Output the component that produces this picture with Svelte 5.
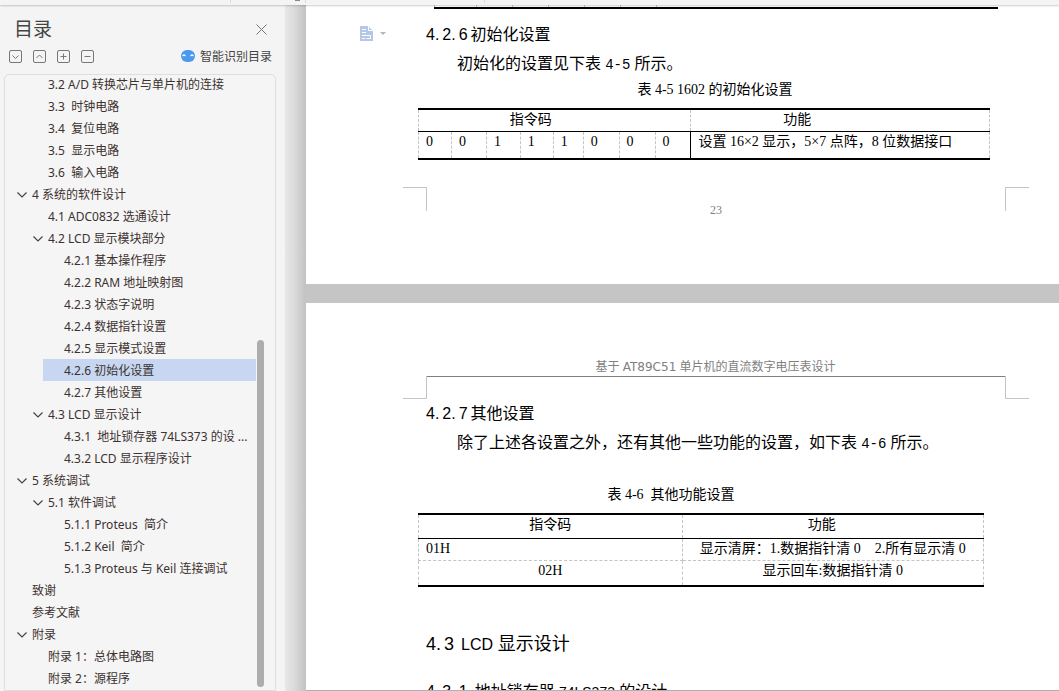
<script>
  const outline = [
    { level: 2, text: '3.2 A/D 转换芯片与单片机的连接' },
    { level: 2, text: '3.3  时钟电路' },
    { level: 2, text: '3.4  复位电路' },
    { level: 2, text: '3.5  显示电路' },
    { level: 2, text: '3.6  输入电路' },
    { level: 1, text: '4 系统的软件设计', open: true },
    { level: 2, text: '4.1 ADC0832 选通设计' },
    { level: 2, text: '4.2 LCD 显示模块部分', open: true },
    { level: 3, text: '4.2.1 基本操作程序' },
    { level: 3, text: '4.2.2 RAM 地址映射图' },
    { level: 3, text: '4.2.3 状态字说明' },
    { level: 3, text: '4.2.4 数据指针设置' },
    { level: 3, text: '4.2.5 显示模式设置' },
    { level: 3, text: '4.2.6 初始化设置' },
    { level: 3, text: '4.2.7 其他设置' },
    { level: 2, text: '4.3 LCD 显示设计', open: true },
    { level: 3, text: '4.3.1  地址锁存器 74LS373 的设 ...' },
    { level: 3, text: '4.3.2 LCD 显示程序设计' },
    { level: 1, text: '5 系统调试', open: true },
    { level: 2, text: '5.1 软件调试', open: true },
    { level: 3, text: '5.1.1 Proteus  简介' },
    { level: 3, text: '5.1.2 Keil  简介' },
    { level: 3, text: '5.1.3 Proteus 与 Keil 连接调试' },
    { level: 1, text: '致谢' },
    { level: 1, text: '参考文献' },
    { level: 1, text: '附录', open: true },
    { level: 2, text: '附录 1：总体电路图' },
    { level: 2, text: '附录 2：源程序' }
  ];
  let selected = $state(13);

  const tools = [
    { name: '展开', d: 'M3.5 5.5 L6.5 8.5 L9.5 5.5' },
    { name: '收起', d: 'M3.5 8 L6.5 5 L9.5 8' },
    { name: '升级', d: 'M3.5 6.5 H9.5 M6.5 3.5 V9.5' },
    { name: '降级', d: 'M3.5 6.5 H9.5' }
  ];

  const bits = [0, 0, 1, 1, 1, 0, 0, 0];
  const bitWidths = [33, 35, 34, 33, 30, 36, 36, 36];
  const pct = (n, total) => `${(n / total) * 100}%`;
</script>

<div class="app">
  <div class="strip">
    <svg width="500" height="5" aria-hidden="true">
      <path d="M230.5 0 V3 M305.5 0 V3 M484.5 0 V3" stroke="#dcdcdc" />
      <path d="M295 0 H300 V1 H295 Z" fill="#888" />
    </svg>
  </div>
  <div class="main">
    <aside>
      <header>
        <h1>目录</h1>
        <button class="close" aria-label="关闭">
          <svg width="11" height="11"><path d="M0.5 0.5 L10.5 10.5 M10.5 0.5 L0.5 10.5" stroke="#777" fill="none" /></svg>
        </button>
      </header>
      <div class="tools">
        {#each tools as t}
          <button aria-label={t.name}>
            <svg width="13" height="13" fill="none" stroke="#777">
              <rect x="0.5" y="0.5" width="12" height="12" rx="1.5" />
              <path d={t.d} />
            </svg>
          </button>
        {/each}
        <button class="smart">
          <svg width="14" height="12" viewBox="0 0 14 12">
            <rect width="14" height="12" rx="6" fill="#4a98f0" />
            <path d="M1.5 6 L3 4.8 L4.6 6 M9.4 6 L11 4.8 L12.5 6" stroke="#fff" stroke-width="1.2" fill="none" />
          </svg>
          智能识别目录
        </button>
      </div>
      <nav>
        <ul>
          {#each outline as item, i}
            <li class="l{item.level}" class:sel={selected === i}>
              <button onclick={() => (selected = i)}>
                <span class="chev">
                  {#if item.open}
                    <svg width="10" height="8"><path d="M0.5 2.5 L5 7 L9.5 2.5" stroke="#444" stroke-width="1.2" fill="none" /></svg>
                  {/if}
                </span>{item.text}</button>
            </li>
          {/each}
        </ul>
        <div class="thumb"></div>
      </nav>
    </aside>
    <div class="gutter"></div>
    <main>
      <section class="page first">
        <div class="table-end">
          {#each [42, 36, 36, 36, 36, 36] as w}<i style:width={pct(w, 564)}></i>{/each}<i></i>
        </div>
        <div class="anchor">
          <button class="mark" aria-label="段落布局">
            <svg width="26" height="15">
              <path d="M0 0 H8 L13 5 V15 H0 Z" fill="#b4c7e7" />
              <path d="M8.5 0.5 V4.5 H12.5" stroke="#fff" fill="none" />
              <path d="M2 3.5 H6 M2 6.5 H6 M2 9.5 H10.5 V12 M2 12.5 H5 M6.5 12.5 H11" stroke="#fff" fill="none" />
              <path d="M20 6 H26 L23 9 Z" fill="#b5b5b5" />
            </svg>
          </button>
          <h3><span class="num"><span>4.</span><span>2.</span><span>6</span></span>初始化设置</h3>
        </div>
        <p>初始化的设置见下表 <span class="half">4-5</span> 所示。</p>
        <table class="t1">
          <caption>表 4-5 1602 的初始化设置</caption>
          <colgroup>
            {#each bitWidths as w}<col style:width={pct(w, 572)} />{/each}
            <col />
          </colgroup>
          <thead>
            <tr><th colspan="8" class="code">指令码</th><th class="func">功能</th></tr>
          </thead>
          <tbody>
            <tr>{#each bits as b}<td>{b}</td>{/each}<td class="desc">设置 16×2 显示，5×7 点阵，8 位数据接口</td></tr>
          </tbody>
        </table>
        <div class="foot"><span class="corner tl"></span><span class="pageno">23</span><span class="corner tr"></span></div>
      </section>
      <section class="page second">
        <div class="running">基于 <span>AT89C51</span> 单片机的直流数字电压表设计</div>
        <div class="corners"><span class="corner bl"></span><span class="corner br"></span></div>
        <h3><span class="num"><span>4.</span><span>2.</span><span>7</span></span>其他设置</h3>
        <p>除了上述各设置之外，还有其他一些功能的设置，如下表 <span class="half">4-6</span> 所示。</p>
        <table class="t2">
          <caption>表 4-6&nbsp; 其他功能设置</caption>
          <colgroup><col style:width={pct(264, 566)} /><col /></colgroup>
          <thead>
            <tr><th>指令码</th><th class="func">功能</th></tr>
          </thead>
          <tbody>
            <tr><td class="left">01H</td><td>显示清屏：1.数据指针清 0　2.所有显示清 0</td></tr>
            <tr><td>02H</td><td>显示回车:数据指针清 0</td></tr>
          </tbody>
        </table>
        <h2><span class="num"><span>4.</span><span>3</span></span><span class="latin">LCD</span> 显示设计</h2>
        <h3><span class="num"><span>4.</span><span>3.</span><span>1</span></span> 地址锁存器 <span class="latin">74LS373</span> 的设计</h3>
      </section>
      <div class="bottom"></div>
    </main>
  </div>
</div>

<style>
  :global(body) { margin: 0; overflow: hidden; }
  .app {
    height: 100vh;
    display: flex;
    flex-direction: column;
    overflow: hidden;
    background: #f4f4f4;
    font-family: "Noto Sans", "Noto Sans CJK SC", sans-serif;
    font-size: 12px;
    color: #3c3230;
  }
  button {
    border: 0;
    padding: 0;
    background: none;
    font: inherit;
    color: inherit;
    display: flex;
    align-items: center;
  }
  svg { display: block; flex: none; }
  .strip { height: 5px; flex: none; background: #f4f4f4; box-shadow: 0 1px 2px #0003; z-index: 1; }
  .main { flex: 1; min-height: 0; display: flex; }

  aside { width: 285px; flex: none; display: flex; flex-direction: column; }
  header { display: flex; align-items: center; justify-content: space-between; padding: 12px 18px 0 14px; }
  h1 { margin: 0; font-size: 19px; font-weight: 400; line-height: 24px; color: #444; }
  .tools { display: flex; align-items: center; gap: 11px; height: 20px; padding: 5px 13px 8px 9px; color: #444; }
  .smart { margin-left: auto; gap: 5px; }
  nav {
    flex: 1;
    min-height: 0;
    position: relative;
    margin: 0 9px 0 4px;
    border: 1px solid #dedede;
    border-radius: 5px 5px 0 0;
    background: #f5f5f5;
    overflow: hidden;
  }
  ul { list-style: none; margin: -2px 19px 0 0; padding: 0; }
  li button { width: 100%; height: 22px; white-space: pre; text-align: left; }
  .chev { width: 15px; flex: none; }
  .l1 { padding-left: 12px; }
  .l2 { padding-left: 28px; }
  .l3 { margin-left: 38px; padding-left: 6px; }
  .sel { background: #c7d7f1; }
  .thumb { position: absolute; right: 11px; top: 265px; bottom: 3px; width: 7px; border-radius: 4px; background: #adadaf; }

  .gutter { width: 21px; flex: none; background: linear-gradient(90deg, #e7e7e7, #dcdcdc 40%, #c2c2c2); }
  main {
    flex: 1;
    min-width: 0;
    position: relative;
    display: flex;
    flex-direction: column;
    gap: 19px;
    background: #c5c5c5;
    overflow: hidden;
    color: #000;
  }
  .page { flex: none; background: #fff; padding: 0 54px 0 120px; }
  .first { padding-bottom: 66px; }
  .second { padding-top: 55px; }

  .table-end { display: flex; height: 2px; margin: 0 7px 0 8px; border-bottom: 2px solid #000; }
  .table-end i { border-left: 1px solid #c4c4c4; box-sizing: border-box; }
  .anchor { position: relative; padding-top: 14px; }
  .mark { position: absolute; left: -66px; top: 17px; }
  h2, h3 { margin: 0; font-weight: 400; white-space: nowrap; }
  h3 { font-size: 16px; line-height: 22px; }
  h2 { font-size: 18px; line-height: 24px; margin-top: 44px; }
  .num, .latin { font-family: "Liberation Sans", sans-serif; }
  .latin { font-size: 14px; }
  .num { display: inline-flex; gap: 3px; margin-right: 3px; }
  h2 .num { margin-right: 7px; }
  h2 .latin { font-size: 16px; }
  p { margin: 5px 0 0; padding-left: 31px; font-size: 16px; line-height: 24px; white-space: nowrap; }
  .half { font-family: "Liberation Mono", monospace; font-size: 14px; }

  table {
    border-collapse: collapse;
    table-layout: fixed;
    margin-left: -8px;
    border-top: 2px solid #000;
    border-bottom: 2px solid #000;
    font-family: "Liberation Serif", "Noto Sans CJK SC", serif;
    font-size: 14px;
    line-height: 20px;
  }
  caption { line-height: 20px; }
  th, td { padding: 0; font-weight: 400; vertical-align: top; white-space: nowrap; border: 1px dashed #c4c4c4; }
  thead th { border-top: 0; border-bottom: 1px solid #000; }
  tbody tr:last-child td { border-bottom: 0; }
  .t1 { width: calc(100% - 7px); }
  .t1 caption { padding-left: 22px; padding-bottom: 8px; margin-top: 3px; }
  .t1 th { height: 21px; }
  .t1 td { height: 26px; padding-left: 7px; }
  .t1 .code { padding-right: 48px; }
  .t1 .func { padding-right: 86px; }
  .t1 .desc { border-left: 1px solid #000; }
  .t2 { width: calc(100% - 13px); text-align: center; }
  .t2 caption { padding-top: 29px; padding-right: 60px; padding-bottom: 8px; }
  .t2 th { height: 23px; }
  .t2 td { height: 21px; }
  .t2 .func { padding-right: 22px; }
  .t2 .left { text-align: left; padding-left: 7px; }
  .t2 tbody tr:last-child td { height: 24px; }

  .foot { display: flex; justify-content: space-between; margin: 27px -24px 0 -23px; }
  .corner { width: 23px; height: 23px; border: 0 solid #c4c4c4; }
  .tl { border-width: 1px 1px 0 0; }
  .tr { border-width: 1px 0 0 1px; }
  .bl { border-width: 0 1px 1px 0; height: 22px; }
  .br { border-width: 0 0 1px 1px; height: 22px; }
  .pageno { font-family: "Liberation Serif", serif; color: #808080; line-height: 16px; padding-top: 15px; }
  .running { text-align: center; color: #808080; line-height: 17px; border-bottom: 1px solid #808080; }
  .running span { font-family: "DejaVu Sans", sans-serif; }
  .corners { display: flex; justify-content: space-between; margin: -1px -24px 3px -23px; }
  .second h2 + h3 { margin-top: 23px; }
  .bottom { position: absolute; left: 0; right: 0; bottom: 0; height: 1px; background: #b0b0b0; }
</style>
